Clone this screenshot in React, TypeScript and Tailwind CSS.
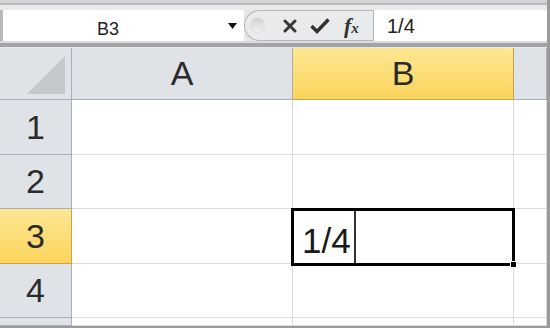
import React from "react";

const font = { fontFamily: '"Liberation Sans", Arial, sans-serif' };

function HeaderCell({ children, selected }: { children?: React.ReactNode; selected?: boolean }) {
  return (
    <div
      className={
        "flex items-center justify-center border-r border-b text-[34px] text-[#2b2b2b] " +
        (selected
          ? "bg-gradient-to-b from-[#fee792] to-[#fbd45a] border-[#c9a24a]"
          : "bg-[#dfe3e8] border-[#a9aeb5]")
      }
    >
      {children}
    </div>
  );
}

function Cell({ children }: { children?: React.ReactNode }) {
  return <div className="border-r border-b border-[#d9dbde] bg-white">{children}</div>;
}

export default function App() {
  const rows = ["1", "2", "3", "4", ""];
  return (
    <div className="w-[550px] h-[328px] overflow-hidden bg-[#e6e7e9] flex flex-col border-r-[3px] border-[#9a9a9a]" style={font}>
      {/* top strip */}
      <div className="h-[10px] bg-[#e9e9ea] border-t-[3px] border-[#d4d4d6] flex flex-col">
        <div className="h-[2px] bg-[#b9babd]" />
      </div>
      {/* formula bar row */}
      <div className="h-[31px] flex">
        <div className="w-[244px] bg-white border-l-[3px] border-[#b7b9bc] relative flex items-center">
          <span className="absolute left-[94px] top-[6px] text-[18px] text-[#222]">B3</span>
          <svg className="absolute left-[225px] top-[13px]" width="9" height="6" viewBox="0 0 9 6">
            <path d="M0 0 L9 0 L4.5 6 Z" fill="#111" />
          </svg>
        </div>
        <div className="w-[129px] bg-[#e9eaec] rounded-l-[16px] border border-r-0 border-[#b4b8be] flex items-center relative">
          <div className="absolute left-[5px] top-[6px] w-[15px] h-[16px] rounded-full bg-gradient-to-b from-[#cfd1d4] to-[#f0f1f2] border border-[#dcdde0]" />
          <svg className="absolute left-[38px] top-[8px]" width="14" height="14" viewBox="0 0 14 14">
            <path d="M2 2 L12 12 M12 2 L2 12" stroke="#383838" strokeWidth="3" strokeLinecap="round" />
          </svg>
          <svg className="absolute left-[65px] top-[7px]" width="20" height="16" viewBox="0 0 20 16">
            <path d="M1.5 8 L7 13.5 L18.5 1.5" fill="none" stroke="#303030" strokeWidth="3.4" strokeLinejoin="miter" />
          </svg>
          <span
            className="absolute left-[99px] top-[1px] text-[22px] italic font-bold text-[#333] leading-[28px]"
            style={{ fontFamily: '"Liberation Serif", "Times New Roman", serif' }}
          >
            f<span className="text-[15px] font-bold">x</span>
          </span>
        </div>
        <div className="flex-1 bg-white border-l border-[#b4b8be] flex items-center pl-[13px] text-[20px] text-[#222]">
          1/4
        </div>
      </div>
      {/* separator */}
      <div className="h-[7px] flex flex-col">
        <div className="h-[2px] bg-[#dcdcde]" />
        <div className="h-[4px] bg-[#a2a4a8]" />
      </div>
      {/* grid */}
      <div className="relative flex-1 grid grid-cols-[72px_221px_221px_33px] grid-rows-[52px_55px_54px_55px_54px_8px] border-b-[2px] border-[#9a9a9a]">
        {/* corner */}
        <div className="bg-[#dfe3e8] border-r border-b border-[#a9aeb5] relative">
          <svg className="absolute left-[27px] top-[8px]" width="38" height="38" viewBox="0 0 38 38">
            <path d="M38 0 L38 38 L0 38 Z" fill="#c4c8cd" />
          </svg>
        </div>
        <HeaderCell>A</HeaderCell>
        <HeaderCell selected>B</HeaderCell>
        <HeaderCell />
        {rows.map((r, i) => (
          <React.Fragment key={i}>
            <HeaderCell selected={r === "3"}>{r}</HeaderCell>
            <Cell />
            <Cell />
            <Cell />
          </React.Fragment>
        ))}
        {/* selection overlay */}
        <div className="absolute left-[291px] top-[160px] w-[224px] h-[58px] border-[3px] border-black">
          <div className="absolute left-[8px] bottom-[5px] text-[35px] leading-none text-[#1a1a1a]">1/4</div>
          <div className="absolute left-[60px] top-0 bottom-0 w-[2px] bg-[#333]" />
          <div className="absolute right-[-5px] bottom-[-5px] w-[7px] h-[7px] bg-black border border-white" />
        </div>
      </div>
    </div>
  );
}
